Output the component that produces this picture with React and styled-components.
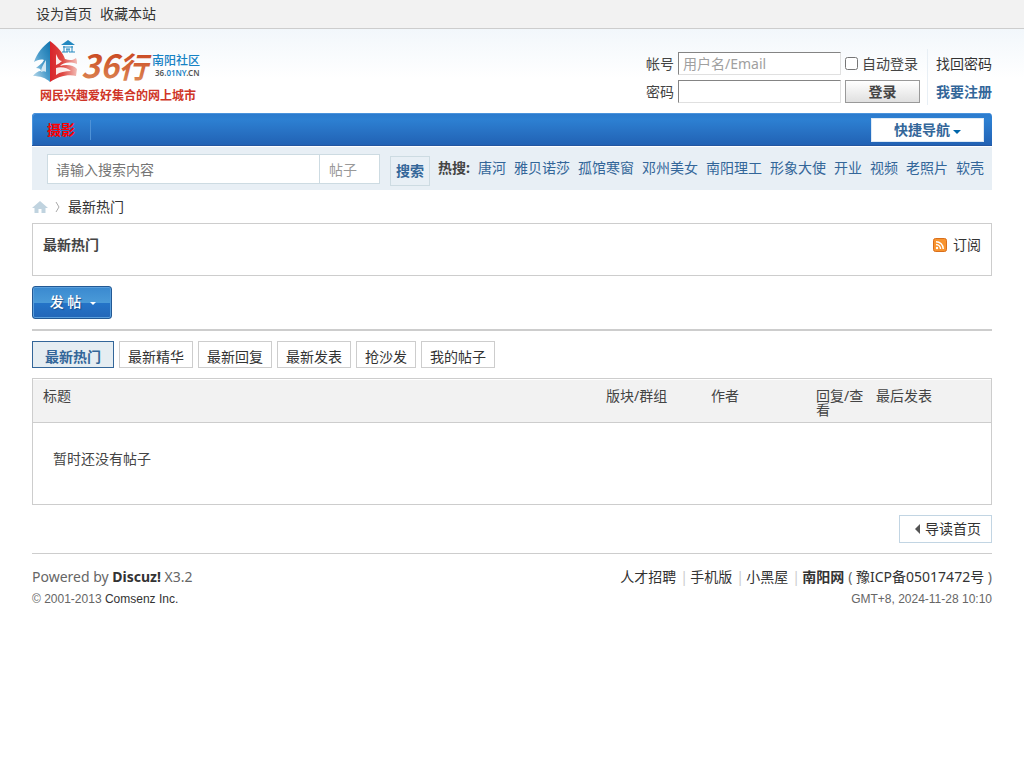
import React from 'react';
import styled, { createGlobalStyle, css } from 'styled-components';

const line = '#cdcdcd';
const blue = '#336699';

const GlobalStyle = createGlobalStyle`
  * { box-sizing: border-box; }
  body {
    margin: 0;
    background: #fff;
    color: #444;
    font: 14px/20px "Noto Sans", "Noto Sans CJK SC", sans-serif;
  }
  input, button, select { font: inherit; color: inherit; margin: 0; }
  a { color: #333; text-decoration: none; }
  a:hover { text-decoration: underline; }
`;

const TopBar = styled.nav`
  display: flex;
  gap: 8px;
  height: 29px;
  padding: 4px 36px;
  background: #f2f2f2;
  border-bottom: 1px solid ${line};
`;

const Backdrop = styled.div`
  padding: 0 32px;
  background: linear-gradient(#f2f7fb, #fff) top / 100% 50px no-repeat;
`;

const Header = styled.header`
  display: flex;
  justify-content: space-between;
  height: 84px;
  padding-top: 10px;
`;

const LoginForm = styled.form`
  display: flex;
  padding-top: 10px;
`;

const LoginGrid = styled.div`
  display: grid;
  grid-template-columns: 28px 163px 75px;
  grid-auto-rows: 23px;
  column-gap: 4px;
  row-gap: 5px;
  align-items: center;
  padding-top: 3px;
`;

const LoginInput = styled.input`
  width: 100%;
  height: 23px;
  padding: 0 4px;
  border: 1px solid;
  border-color: #848484 #e0e0e0 #e0e0e0 #848484;
  background: #fff;
  &::placeholder { color: #a0a0a0; opacity: 1; }
`;

const Remember = styled.label`
  display: flex;
  align-items: center;
  gap: 4px;
  white-space: nowrap;
  input { width: 13px; height: 13px; flex: none; }
`;

const LoginButton = styled.button`
  height: 23px;
  border: 1px solid #999;
  background: linear-gradient(#fff, #e0e0e0);
  font-weight: bold;
  line-height: 20px;
  padding: 0;
`;

const LoginLinks = styled.div`
  display: grid;
  grid-auto-rows: 23px;
  row-gap: 5px;
  align-items: center;
  height: 56px;
  margin-left: 7px;
  padding: 3px 0 0 8px;
  border-left: 1px solid #e8eff5;
`;

const StrongLink = styled.a`
  font-weight: bold;
  color: ${(p) => (p.$accent ? blue : '#333')};
`;

const MainNav = styled.nav`
  display: flex;
  justify-content: space-between;
  height: 33px;
  padding: 5px 8px 0 0;
  border-radius: 4px 4px 0 0;
  border-bottom: 1px solid #2456a0;
  background: linear-gradient(#2b7acd, #2d80d2 20%, #2262b4);
  box-shadow: inset 1px 1px 0 #4a93dc;
`;

const Channel = styled.a`
  height: 20px;
  margin-top: 2px;
  padding: 0 15px;
  border-right: 1px solid #4f92d6;
  color: red;
  font-weight: bold;
`;

const QuickNav = styled.button`
  display: flex;
  align-items: center;
  justify-content: center;
  gap: 3px;
  width: 113px;
  height: 24px;
  padding: 0;
  border: 1px solid #dfeaf5;
  background: #fff;
  color: ${blue};
  font-weight: bold;
`;

const Arrow = styled.span`
  border: ${(p) => p.$size}px solid transparent;
  border-bottom-width: 0;
  border-top-color: ${(p) => p.$color};
  margin-top: 3px;
`;

const SearchBar = styled.form`
  display: flex;
  height: 43px;
  margin-top: 1px;
  padding: 7px 8px 0 15px;
  background: #e8eff5;
`;

const SearchBox = styled.div`
  display: flex;
  flex: 0 0 333px;
  height: 30px;
  border: 1px solid #cddbe2;
  background: #fff;
`;

const SearchInput = styled.input`
  flex: 1;
  min-width: 0;
  padding: 2px 8px 0;
  border: 0;
  background: none;
  &::placeholder { color: #757575; opacity: 1; }
`;

const SearchType = styled.select`
  appearance: none;
  width: 60px;
  padding: 2px 9px 0;
  border: 0;
  border-left: 1px solid #cddbe2;
  background: none;
  color: #999;
`;

const SearchButton = styled.button`
  flex: none;
  width: 40px;
  height: 30px;
  margin: 2px 8px 0 10px;
  padding: 0;
  border: 1px solid #cddbe2;
  background: none;
  color: ${blue};
  font-weight: bold;
`;

const HotList = styled.div`
  display: flex;
  flex-wrap: wrap;
  flex: 1;
  justify-content: space-between;
  height: 28px;
  padding-top: 4px;
  overflow: hidden;
  white-space: nowrap;
  a { color: ${blue}; }
`;

const Crumbs = styled.nav`
  display: flex;
  align-items: center;
  gap: 7px;
  height: 33px;
  svg { display: block; flex: none; }
`;

const GuideBox = styled.section`
  display: flex;
  justify-content: space-between;
  height: 53px;
  padding: 11px 10px;
  border: 1px solid ${line};
`;

const GuideTitle = styled.h1`
  margin: 0;
  font-size: 14px;
  line-height: 20px;
`;

const Subscribe = styled.a`
  display: flex;
  align-items: center;
  gap: 6px;
  height: 20px;
`;

const PostRow = styled.div`
  padding: 10px 0;
  border-bottom: 2px solid ${line};
`;

const PostButton = styled.button`
  display: flex;
  align-items: center;
  justify-content: center;
  gap: 9px;
  width: 80px;
  height: 33px;
  padding: 0 0 2px 2px;
  border: 1px solid #235994;
  border-radius: 3px;
  background: linear-gradient(#3a89cf, #4a9ad8 50%, #2474c8 51%, #2366b8);
  box-shadow: inset 0 0 0 1px #5b9fdc;
  color: #fff;
  font-weight: 500;
  text-shadow: 1px 1px 1px #1a4f8c;
`;

const Tabs = styled.nav`
  display: flex;
  gap: 5px;
  padding: 10px 0;
`;

const Tab = styled.a`
  height: 27px;
  padding: 5px 8px 0;
  border: 1px solid ${line};
  ${(p) => p.$active && css`
    padding: 5px 12px 0;
    border-color: ${blue};
    background: #e5edf2;
    color: ${blue};
    font-weight: bold;
  `}
`;

const ThreadTable = styled.table`
  width: 100%;
  table-layout: fixed;
  border-collapse: separate;
  border-spacing: 0;
  border: 1px solid ${line};
`;

const HeadCell = styled.th`
  width: ${(p) => p.$width || 'auto'};
  height: 44px;
  padding: ${(p) => (p.$first ? '10px 10px 5px' : '10px 5px 5px 0')};
  border-bottom: 1px solid ${line};
  background: #f2f2f2;
  box-shadow: inset 0 1px 0 #fff;
  font-weight: normal;
  line-height: 14px;
  text-align: left;
  vertical-align: top;
`;

const EmptyCell = styled.td`
  height: 81px;
  padding: 0 20px 10px;
`;

const BackRow = styled.div`
  display: flex;
  justify-content: flex-end;
  padding: 10px 0;
`;

const BackButton = styled.a`
  display: flex;
  align-items: center;
  gap: 5px;
  height: 28px;
  padding: 0 10px 0 15px;
  border: 1px solid #c2d5e3;
`;

const Footer = styled.footer`
  display: flex;
  justify-content: space-between;
  padding-top: 13px;
  border-top: 1px solid ${line};
  color: #666;
`;

const FooterSide = styled.div`
  text-align: ${(p) => (p.$right ? 'right' : 'left')};
  p { margin: 0; }
`;

const Small = styled.p`
  padding-top: 2px;
  font: 12px/20px "Liberation Sans", sans-serif;
`;

const FooterLinks = styled.p`
  display: flex;
  justify-content: flex-end;
  gap: 4px;
`;

const Pipe = styled.span`
  width: 6px;
  color: #ccc;
  text-align: center;
`;

const LogoSvg = styled.svg`
  display: block;
  overflow: visible;
`;

const Logo = () => (
  <LogoSvg width="172" height="68" viewBox="0 0 172 68" role="img" aria-label="36行">
    <defs>
      <linearGradient id="sail" x1="1" y1="0" x2="0" y2="1">
        <stop offset="0" stopColor="#1173ad" />
        <stop offset="0.5" stopColor="#4a9ccb" />
        <stop offset="1" stopColor="#c9e2ef" />
      </linearGradient>
      <linearGradient id="hull" x1="0" y1="0" x2="1" y2="0">
        <stop offset="0" stopColor="#d8232a" />
        <stop offset="0.45" stopColor="#de4540" />
        <stop offset="1" stopColor="#f3bdb6" />
      </linearGradient>
      <linearGradient id="brand" x1="0" y1="0" x2="0" y2="1">
        <stop offset="0.2" stopColor="#c8431d" />
        <stop offset="1" stopColor="#e0925e" />
      </linearGradient>
    </defs>
    <path d="M18 2 C11 7 5 14 2 23 C5 21 9 20 12 21 C10 25 6 27 4 29 C7 29 9 30 9 32 C6 32 3 34 1 37 C8 37 14 39 18 43Z" fill="url(#sail)" />
    <path d="M14 21 C11 26 9 29 9 33 C11 32 13 32 14 33Z" fill="#fff" fillOpacity="0.75" />
    <path d="M18 2 C26 8 31 14 33 20 C38 22 42 21 44 19 C45 21 45 23 45 25 C37 22 31 24 28 27 C34 25 42 26 45 30 L44 37 C35 35 26 38 18 43Z" fill="url(#hull)" />
    <path d="M24 15 C26 19 27 22 30 22 C28 24 26 25 24 26Z M24 29 C29 27 36 29 39 32 C33 32 28 33 24 36Z" fill="#fff" fillOpacity="0.9" />
    <path d="M36 1 L43 6 H29Z" fill="#2388c0" />
    <path d="M31 8 H41 M32 7 V13 M35 10 V13 M37 10 V13 M40 7 V13 M34 10 H38 M30 13 H36 M37 13 H43" fill="none" stroke="#2388c0" strokeWidth="1" />
    <text x="49" y="39" fill="url(#brand)" fontFamily="'Noto Sans CJK SC', sans-serif" fontSize="32" fontWeight="700" fontStyle="italic">
      36<tspan fontSize="29">行</tspan>
    </text>
    <g fill="#1682c4">
      <text x="120" y="26" fontFamily="'Noto Sans CJK SC', sans-serif" fontSize="12" fontWeight="500">南阳社区</text>
      <text x="123" y="37" fontFamily="'Noto Sans', sans-serif" fontSize="8" fontWeight="600">
        <tspan fill="#555">36.</tspan>01NY<tspan fill="#555">.CN</tspan>
      </text>
    </g>
    <text x="8" y="61" fill="#cf3527" fontFamily="'Noto Sans CJK SC', sans-serif" fontSize="12" fontWeight="700">
      网民兴趣爱好集合的网上城市
    </text>
  </LogoSvg>
);

const HomeIcon = () => (
  <svg width="16" height="14" viewBox="0 0 16 14" aria-hidden="true">
    <path d="M8 1 L0 8 H2.5 V13 H6.5 V9 H9.5 V13 H13.5 V8 H16Z" fill="#c0d3df" />
  </svg>
);

const CrumbArrow = () => (
  <svg width="6" height="12" viewBox="0 0 6 12" aria-hidden="true">
    <path d="M1 1 L4 6 L1 11" fill="none" stroke="#aaa" />
  </svg>
);

const RssIcon = () => (
  <svg width="14" height="14" viewBox="0 0 14 14" aria-hidden="true">
    <rect x="0.5" y="0.5" width="13" height="13" rx="2" fill="#f8942f" stroke="#d96f1c" />
    <circle cx="4" cy="10" r="1.2" fill="#fff" />
    <path d="M3 6.5 A4.5 4.5 0 0 1 7.5 11 M3 3.7 A7.3 7.3 0 0 1 10.3 11" fill="none" stroke="#fff" strokeWidth="1.4" />
  </svg>
);

const LeftArrow = () => (
  <svg width="5" height="10" viewBox="0 0 5 10" aria-hidden="true">
    <path d="M5 0 V10 L0 5Z" fill="#555" />
  </svg>
);

const hotWords = ['唐河', '雅贝诺莎', '孤馆寒窗', '邓州美女', '南阳理工', '形象大使', '开业', '视频', '老照片', '软壳'];
const tabs = ['最新热门', '最新精华', '最新回复', '最新发表', '抢沙发', '我的帖子'];

export default function App() {
  return (
    <>
      <GlobalStyle />
      <TopBar>
        <a href="#home">设为首页</a>
        <a href="#favorite">收藏本站</a>
      </TopBar>
      <Backdrop>
        <Header>
          <a href="#index"><Logo /></a>
          <LoginForm onSubmit={(e) => e.preventDefault()}>
            <LoginGrid>
              <label htmlFor="user">帐号</label>
              <LoginInput id="user" placeholder="用户名/Email" />
              <Remember><input type="checkbox" />自动登录</Remember>
              <label htmlFor="pass">密码</label>
              <LoginInput id="pass" type="password" />
              <LoginButton type="submit">登录</LoginButton>
            </LoginGrid>
            <LoginLinks>
              <a href="#lost">找回密码</a>
              <StrongLink $accent href="#register">我要注册</StrongLink>
            </LoginLinks>
          </LoginForm>
        </Header>
        <MainNav>
          <Channel href="#photo">摄影</Channel>
          <QuickNav type="button">快捷导航<Arrow $size={4} $color="#0066aa" /></QuickNav>
        </MainNav>
        <SearchBar onSubmit={(e) => e.preventDefault()}>
          <SearchBox>
            <SearchInput aria-label="搜索" placeholder="请输入搜索内容" />
            <SearchType aria-label="类型"><option>帖子</option></SearchType>
          </SearchBox>
          <SearchButton type="submit">搜索</SearchButton>
          <HotList>
            <strong>热搜:</strong>
            {hotWords.map((w) => <a key={w} href="#search">{w}</a>)}
          </HotList>
        </SearchBar>
        <Crumbs>
          <a href="#index" aria-label="首页"><HomeIcon /></a>
          <CrumbArrow />
          <a href="#hot">最新热门</a>
        </Crumbs>
        <GuideBox>
          <GuideTitle>最新热门</GuideTitle>
          <Subscribe href="#rss"><RssIcon />订阅</Subscribe>
        </GuideBox>
        <PostRow>
          <PostButton type="button">发 帖<Arrow $size={3} $color="#fff" /></PostButton>
        </PostRow>
        <Tabs>
          {tabs.map((t, i) => <Tab key={t} href="#tab" $active={i === 0}>{t}</Tab>)}
        </Tabs>
        <ThreadTable>
          <thead>
            <tr>
              <HeadCell $first>标题</HeadCell>
              <HeadCell $width="105px">版块/群组</HeadCell>
              <HeadCell $width="105px">作者</HeadCell>
              <HeadCell $width="60px">回复/查看</HeadCell>
              <HeadCell $width="115px">最后发表</HeadCell>
            </tr>
          </thead>
          <tbody>
            <tr><EmptyCell colSpan={5}>暂时还没有帖子</EmptyCell></tr>
          </tbody>
        </ThreadTable>
        <BackRow>
          <BackButton href="#guide"><LeftArrow />导读首页</BackButton>
        </BackRow>
        <Footer>
          <FooterSide>
            <p>Powered by <StrongLink href="#discuz">Discuz!</StrongLink> X3.2</p>
            <Small>© 2001-2013 <a href="#comsenz">Comsenz Inc.</a></Small>
          </FooterSide>
          <FooterSide $right>
            <FooterLinks>
              <a href="#jobs">人才招聘</a><Pipe>|</Pipe>
              <a href="#mobile">手机版</a><Pipe>|</Pipe>
              <a href="#darkroom">小黑屋</a><Pipe>|</Pipe>
              <StrongLink href="#site">南阳网</StrongLink>
              <span>( <a href="#icp">豫ICP备05017472号</a> )</span>
            </FooterLinks>
            <Small>GMT+8, 2024-11-28 10:10</Small>
          </FooterSide>
        </Footer>
      </Backdrop>
    </>
  );
}
